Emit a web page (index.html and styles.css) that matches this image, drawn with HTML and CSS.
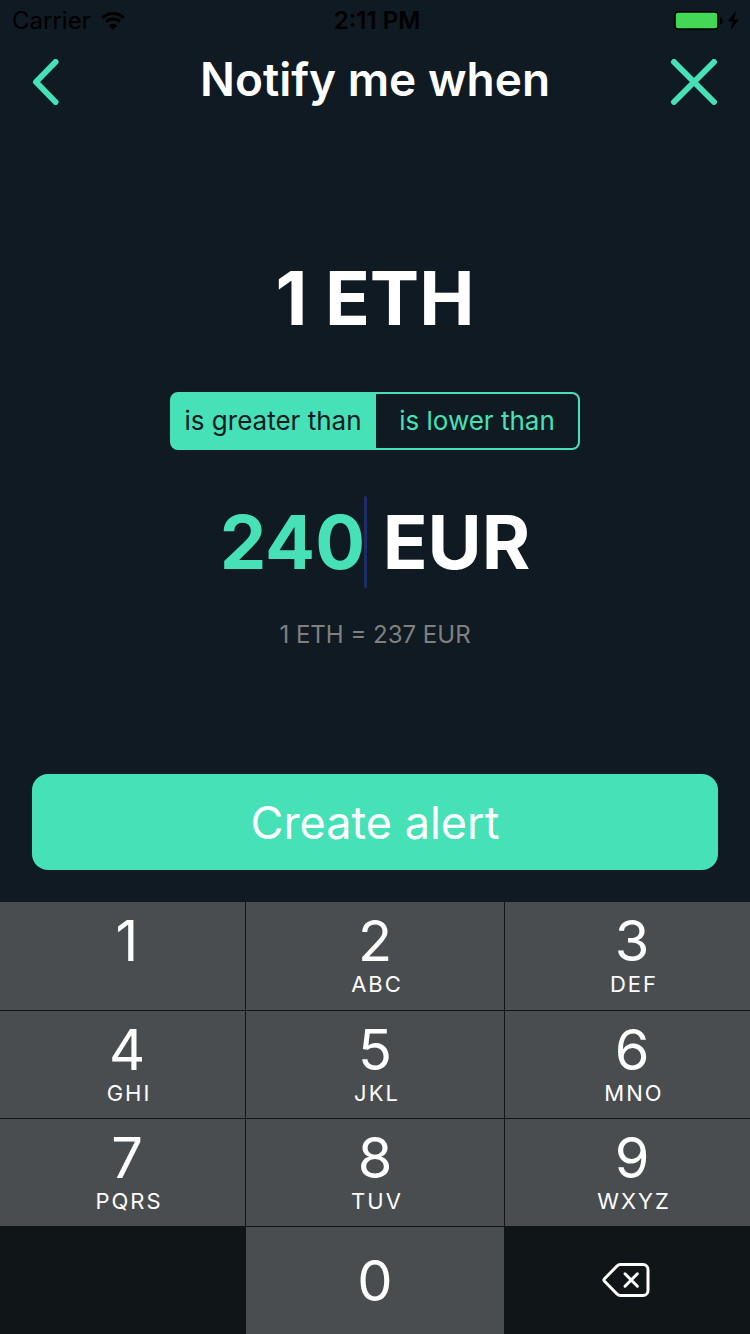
FILE: index.html
```html
<!DOCTYPE html>
<html lang="en">
<head>
<meta charset="utf-8">
<meta name="viewport" content="width=device-width, initial-scale=1">
<title>Notify me when</title>
<link rel="stylesheet" href="styles.css">
</head>
<body>
<div class="app">
  <div class="status">
    <div class="status-left">
      <span>Carrier</span>
      <svg class="wifi" width="24" height="18" viewBox="0 0 24 18" aria-hidden="true">
        <path d="M1.3 5.8a15.5 15.5 0 0 1 21.4 0M5.1 9.7a10 10 0 0 1 13.800 0" fill="none" stroke="#000" stroke-width="3"/>
        <path d="M12 18l-4.300-4.400a6.200 6.200 0 0 1 8.600 0z"/>
      </svg>
    </div>
    <div class="status-time">2:11 PM</div>
    <div class="status-right">
      <svg width="68" height="20" viewBox="0 0 68 20" aria-hidden="true">
        <rect x="1" y="1" width="43" height="17" rx="3" fill="#44d756" stroke="#000" stroke-width="1.600"/>
        <path d="M46 6.500c3.400 0 3.400 7 0 7z"/>
        <path d="M62 0L54 10.300h4.600L56.500 19 65 8.400h-4.800z"/>
      </svg>
    </div>
  </div>

  <header class="header">
    <button class="icon-button" type="button" aria-label="Back">
      <svg width="28" height="46" viewBox="0 0 28 46"><path d="M23.500 3L4 23l19.500 20"/></svg>
    </button>
    <h1 class="title">Notify me when</h1>
    <button class="icon-button icon-button-end" type="button" aria-label="Close">
      <svg width="48" height="46" viewBox="0 0 48 46"><path d="M4 3l40 40M44 3L4 43"/></svg>
    </button>
  </header>

  <main class="main">
    <p class="amount">1 ETH</p>
    <div class="segments" role="radiogroup" aria-label="Condition">
      <label class="segment"><input class="segment-input" type="radio" name="condition" checked><span class="segment-text segment-text-first">is greater than</span></label>
      <label class="segment"><input class="segment-input" type="radio" name="condition"><span class="segment-text segment-text-last">is lower than</span></label>
    </div>
    <div class="price">
      <input class="price-input" id="price" type="text" inputmode="numeric" value="240">
      <span class="caret"></span>
      <label class="price-unit" for="price">EUR</label>
    </div>
    <p class="rate">1 ETH = 237 EUR</p>
  </main>

  <div class="actions">
    <button class="create" type="button">Create alert</button>
  </div>

  <div class="keypad">
    <button class="key key-side" type="button"><span class="digit">1</span></button>
    <button class="key" type="button"><span class="digit">2</span><span class="letters">ABC</span></button>
    <button class="key key-side" type="button"><span class="digit">3</span><span class="letters">DEF</span></button>
    <button class="key key-side" type="button"><span class="digit">4</span><span class="letters">GHI</span></button>
    <button class="key" type="button"><span class="digit">5</span><span class="letters">JKL</span></button>
    <button class="key key-side" type="button"><span class="digit">6</span><span class="letters">MNO</span></button>
    <button class="key key-side" type="button"><span class="digit">7</span><span class="letters">PQRS</span></button>
    <button class="key" type="button"><span class="digit">8</span><span class="letters">TUV</span></button>
    <button class="key key-side" type="button"><span class="digit">9</span><span class="letters">WXYZ</span></button>
    <div></div>
    <button class="key key-zero" type="button"><span class="digit">0</span></button>
    <button class="key key-delete" type="button" aria-label="Delete">
      <svg width="48" height="36" viewBox="0 0 48 36"><path d="M18.500 2.500H41a5 5 0 0 1 5 5v21a5 5 0 0 1-5 5H18.500a5 5 0 0 1-3.500-1.500L2.500 19.200a1.700 1.700 0 0 1 0-2.400L15 4a5 5 0 0 1 3.500-1.500z"/><path d="M23 11.800l12.400 12.400M35.400 11.800L23 24.200" stroke-width="2.700"/></svg>
    </button>
  </div>
</div>
</body>
</html>
```

FILE: styles.css
```css
* {
  box-sizing: border-box;
}

body {
  margin: 0;
  background: #0f1a22;
  color: #fff;
  font-family: Inter, "Liberation Sans", sans-serif;
}

button,
input {
  margin: 0;
  padding: 0;
  border: 0;
  background: none;
  color: inherit;
  font: inherit;
}

p,
h1 {
  margin: 0;
}

svg {
  display: block;
}

.app {
  display: flex;
  flex-direction: column;
  min-height: 100vh;
}

.status {
  display: grid;
  grid-template-columns: 1fr auto 1fr;
  align-items: center;
  height: 40px;
  padding: 2px 8px 0 12px;
  color: #000;
  font-size: 24px;
  line-height: 38px;
}

.status-left {
  display: flex;
  align-items: center;
  gap: 10px;
}

.status-time {
  font-weight: 600;
}

.status-right {
  justify-self: end;
}

.header {
  display: grid;
  grid-template-columns: 1fr auto 1fr;
  align-items: center;
  height: 84px;
  padding: 0 32px;
}

.icon-button {
  justify-self: start;
}

.icon-button-end {
  justify-self: end;
}

.icon-button path {
  fill: none;
  stroke: #46e1b6;
  stroke-width: 6;
  stroke-linecap: round;
  stroke-linejoin: round;
}

.title {
  padding-bottom: 6px;
  font-size: 46px;
  font-weight: 600;
  line-height: 56px;
}

.main {
  display: flex;
  flex: 1;
  flex-direction: column;
  align-items: center;
  justify-content: center;
  padding-top: 4px;
}

.amount {
  font-size: 74px;
  font-weight: 700;
  line-height: 92px;
}

.segments {
  display: grid;
  grid-template-columns: 206fr 204fr;
  width: 410px;
  margin: 48px 0 46px;
}

.segment {
  position: relative;
  display: grid;
}

.segment-input {
  position: absolute;
  inset: 0;
  appearance: none;
}

.segment-text {
  position: relative;
  border: 2px solid #46e1b6;
  color: #46e1b6;
  font-size: 26px;
  line-height: 54px;
  text-align: center;
}

.segment-text-first {
  border-radius: 8px 0 0 8px;
}

.segment-text-last {
  border-left: 0;
  border-radius: 0 8px 8px 0;
}

.segment-input:checked + .segment-text {
  background: #46e1b6;
  color: #0f1a22;
}

.price {
  display: flex;
  align-items: center;
  font-size: 74px;
  font-weight: 700;
  line-height: 92px;
}

.price-input {
  width: 144px;
  height: 92px;
  color: #46e1b6;
  text-align: right;
}

.caret {
  width: 3px;
  height: 92px;
  border-radius: 2px;
  background: #1d2c6b;
}

.price-unit {
  padding-left: 16px;
}

.rate {
  margin-top: 32px;
  color: #808080;
  font-size: 24px;
  line-height: 30px;
}

.actions {
  display: grid;
  padding: 0 32px 32px;
}

.create {
  height: 96px;
  border-radius: 16px;
  background: #46e1b6;
  font-size: 45px;
}

.keypad {
  display: grid;
  grid-template-columns: 245fr 258fr 245fr;
  grid-template-rows: 108px 107px 107px 107px;
  gap: 1px;
  background: #101518;
}

.key {
  display: flex;
  flex-direction: column;
  align-items: center;
  padding-top: 8px;
  background: #494d50;
}

.key-side {
  padding-left: 9px;
}

.digit {
  font-size: 56px;
  line-height: 62px;
}

.letters {
  padding-left: 4px;
  font-size: 22px;
  letter-spacing: 2px;
  line-height: 24px;
}

.key-zero {
  justify-content: center;
  padding-top: 0;
}

.key-delete {
  justify-content: center;
  padding: 0 4px 2px 0;
  background: none;
}

.key-delete path {
  fill: none;
  stroke: #fff;
  stroke-width: 3;
  stroke-linecap: round;
  stroke-linejoin: round;
}
```
